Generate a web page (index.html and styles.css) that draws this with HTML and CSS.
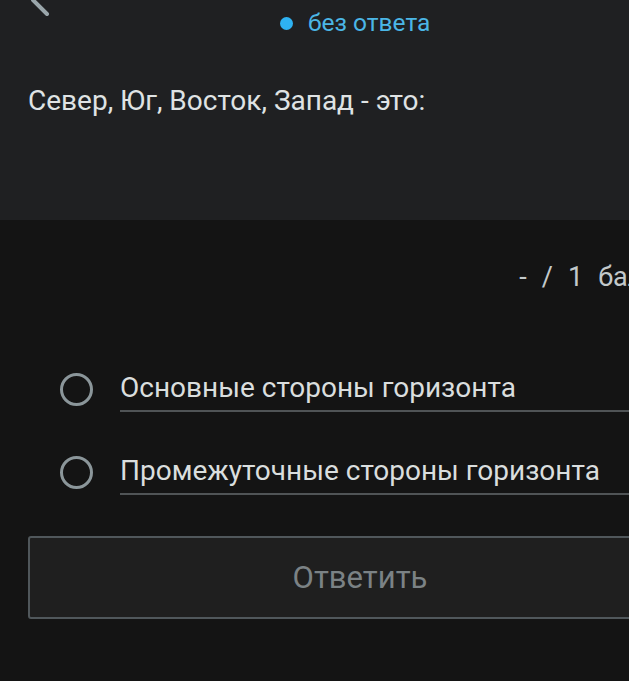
FILE: index.html
```html
<!DOCTYPE html>
<html lang="ru">

<head>
    <meta charset="UTF-8">
    <meta name="viewport" content="width=device-width, initial-scale=1.0">
    <title>Вопрос</title>
    <link rel="stylesheet" href="styles.css">
</head>

<body>

    <div class="question">
        <div class="topbar">
            <svg class="back" width="30" height="24" viewBox="0 0 30 24">
                <path d="M14 -12 L2 0 L16 14" fill="none" stroke="#9aa6ab" stroke-width="4" stroke-linecap="round" stroke-linejoin="round" />
            </svg>
            <div class="status">
                <span class="dot"></span>
                <span>без ответа</span>
            </div>
        </div>
        <p class="text">Север, Юг, Восток, Запад - это:</p>
    </div>

    <div class="answers">
        <div class="points">
            <span>-</span><span>/</span><span>1</span><span>балл</span>
        </div>

        <ul class="options">
            <li class="option">
                <span class="radio"></span>
                <span class="label">Основные стороны горизонта</span>
            </li>
            <li class="option">
                <span class="radio"></span>
                <span class="label">Промежуточные стороны горизонта</span>
            </li>
        </ul>

        <button class="submit" type="button">Ответить</button>
    </div>

</body>

</html>
```

FILE: styles.css
```css
html,
body {
    margin: 0;
    padding: 0;
    background-color: #141414;
    overflow: hidden;
}

body {
    font-family: Roboto, "Noto Sans", sans-serif;
    width: 629px;
    height: 681px;
}

.question {
    background-color: #1f2022;
    height: 220px;
    box-sizing: border-box;
    padding: 0 28px;
}

.topbar {
    display: flex;
    align-items: flex-start;
    height: 48px;
}

.back {
    margin-left: 3px;
    display: block;
}

.status {
    display: flex;
    align-items: center;
    gap: 15px;
    margin-left: 219px;
    margin-top: 9px;
    color: #4bb6e6;
    font-size: 24.5px;
    line-height: 28px;
}

.dot {
    width: 13px;
    height: 13px;
    border-radius: 50%;
    background-color: #2eb2f2;
}

.text {
    margin: 36px 0 0;
    color: #dfe3e4;
    font-size: 28px;
    line-height: 34px;
}

.answers {
    padding: 40px 0 0 28px;
}

.points {
    display: flex;
    justify-content: flex-end;
    gap: 15px;
    margin-right: -30px;
    color: #c3c9cb;
    font-size: 27px;
    line-height: 34px;
}

.options {
    list-style: none;
    margin: 76px 0 0;
    padding: 0;
}

.option {
    display: flex;
    align-items: flex-start;
    height: 83px;
}

.radio {
    width: 27px;
    height: 27px;
    border: 3px solid #8b969a;
    border-radius: 50%;
    margin: 3px 0 0 32px;
    flex-shrink: 0;
}

.label {
    flex: 1;
    margin-left: 27px;
    color: #dadede;
    font-size: 28px;
    line-height: 36px;
    padding-bottom: 4px;
    border-bottom: 2px solid #505456;
}

.submit {
    display: block;
    width: 664px;
    height: 83px;
    margin-top: 0;
    background-color: #1f1f1f;
    border: 2px solid #50575b;
    border-radius: 3px;
    color: #7b8285;
    font-family: Roboto, "Noto Sans", sans-serif;
    font-size: 31px;
}
```
